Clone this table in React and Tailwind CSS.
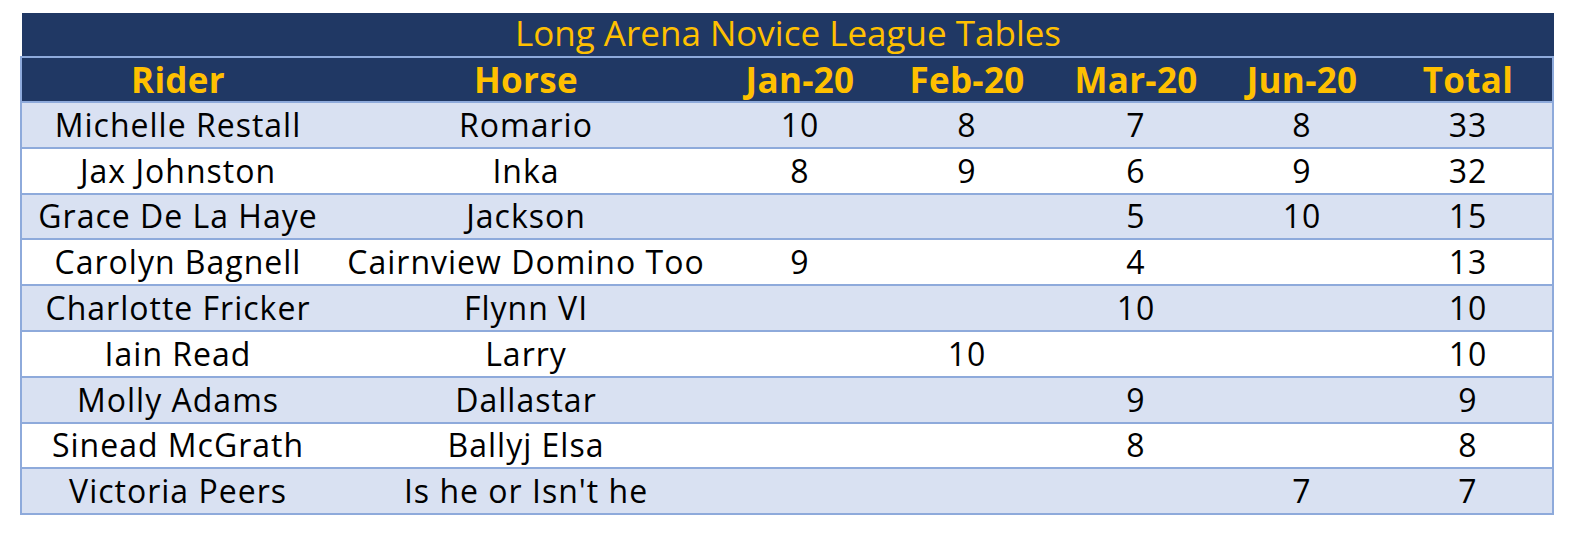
import React from "react";

const rows = [
  ["Michelle Restall", "Romario", "10", "8", "7", "8", "33"],
  ["Jax Johnston", "Inka", "8", "9", "6", "9", "32"],
  ["Grace De La Haye", "Jackson", "", "", "5", "10", "15"],
  ["Carolyn Bagnell", "Cairnview Domino Too", "9", "", "4", "", "13"],
  ["Charlotte Fricker", "Flynn VI", "", "", "10", "", "10"],
  ["Iain Read", "Larry", "", "10", "", "", "10"],
  ["Molly Adams", "Dallastar", "", "", "9", "", "9"],
  ["Sinead McGrath", "Ballyj Elsa", "", "", "8", "", "8"],
  ["Victoria Peers", "Is he or Isn't he", "", "", "", "7", "7"],
];

const headers = ["Rider", "Horse", "Jan-20", "Feb-20", "Mar-20", "Jun-20", "Total"];

const cols = "grid grid-cols-[312px_384px_164px_170px_168px_164px_168px]";

const App = () => {
  return (
    <div className="w-[1584px] h-[538px] bg-white pl-[20px] pt-[13px] font-['Open_Sans','Noto_Sans',sans-serif]">
      <div className="ml-[2px] w-[1532px] h-[43px] bg-[#203864] flex items-center justify-center pb-[4px] text-[35px] text-[#ffc000] leading-none">
        Long Arena Novice League Tables
      </div>
      <div className="w-[1534px] border-x-2 border-b-2 border-[#8eaadb]">
        <div className={`${cols} h-[45px] bg-[#203864] border-t-2 border-[#8eaadb] items-center text-[35px] tracking-[0.3px] font-bold text-[#ffc000] leading-none`}>
          {headers.map((h) => (
            <div key={h} className="text-center">
              {h}
            </div>
          ))}
        </div>
        {rows.map((r, i) => (
          <div
            key={r[0]}
            className={`${cols} h-[45.8px] border-t-2 border-[#8eaadb] items-center text-[32px] tracking-[1px] text-black leading-none ${
              i % 2 === 0 ? "bg-[#d9e1f2]" : "bg-white"
            }`}
          >
            {r.map((c, j) => (
              <div key={j} className="text-center whitespace-nowrap">
                {c}
              </div>
            ))}
          </div>
        ))}
      </div>
    </div>
  );
};

export default App;
